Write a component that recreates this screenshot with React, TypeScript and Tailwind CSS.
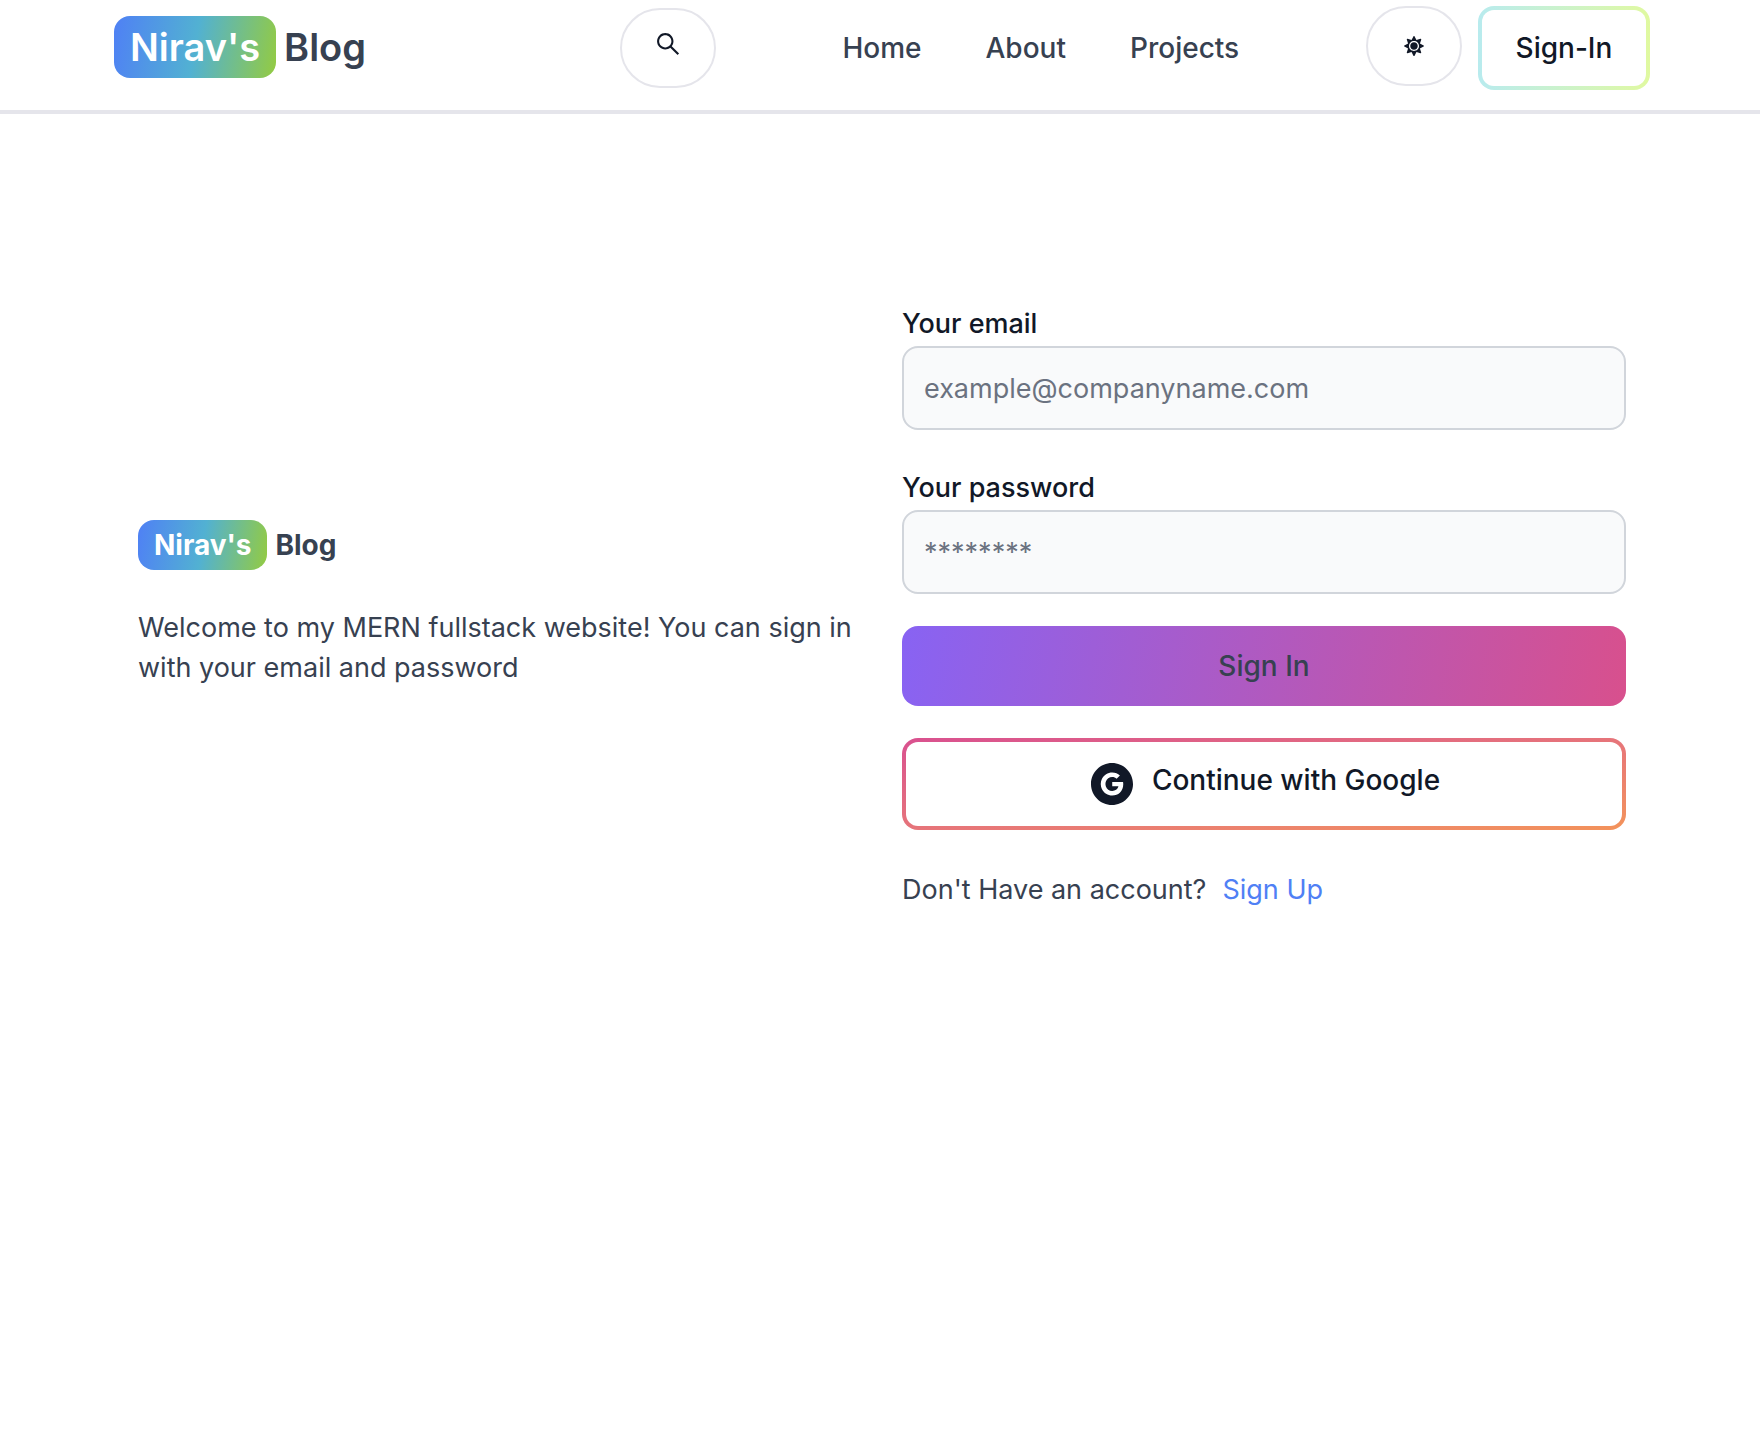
import type { ReactNode } from "react";
import { AiFillGoogleCircle, AiOutlineSearch } from "react-icons/ai";
import { FaSun } from "react-icons/fa";

const navItems = ["Home", "About", "Projects"];

function BrandTag() {
  return (
    <span className="rounded-2xl bg-[linear-gradient(100deg,#4f80f5,#52b1d2_50%,#94cb41)] px-4 text-white">
      Nirav&apos;s
    </span>
  );
}

function RoundButton({ label, className = "", children }: { label: string; className?: string; children: ReactNode }) {
  return (
    <button
      type="button"
      aria-label={label}
      className={`flex h-20 w-24 justify-center rounded-full border-2 border-[#e5e5eb] text-[#111827] ${className}`}
    >
      {children}
    </button>
  );
}

function Field({ id, label, type, placeholder }: { id: string; label: string; type: string; placeholder: string }) {
  return (
    <div>
      <label htmlFor={id} className="block pt-1 text-[27px] leading-[44px] font-medium text-[#111827]">
        {label}
      </label>
      <input
        id={id}
        type={type}
        placeholder={placeholder}
        className="block h-[84px] w-full rounded-2xl border-2 border-[#d1d5db] bg-[#f9fafb] px-5 text-[27px] text-[#111827] placeholder:text-[#6b7280] placeholder:opacity-100"
      />
    </div>
  );
}

export default function App() {
  return (
    <div className="min-h-screen bg-white font-['Inter',sans-serif] text-[27px] leading-10 text-[#374151]">
      <header className="flex items-start justify-between border-b-4 border-[#e5e5eb] pt-[6px] pr-[110px] pb-5 pl-[114px] text-[28px]">
        <a href="#" className="mt-[10px] flex items-center gap-2 text-[38px] leading-[62px] font-semibold">
          <BrandTag />
          Blog
        </a>
        <div />
        <RoundButton label="Search" className="mt-[2px] pt-5">
          <AiOutlineSearch className="size-7" />
        </RoundButton>
        <nav className="flex h-[84px] items-center gap-16 font-medium">
          {navItems.map((item) => (
            <a key={item} href="#">
              {item}
            </a>
          ))}
        </nav>
        <div className="flex items-start gap-4">
          <RoundButton label="Toggle theme" className="items-center">
            <FaSun className="size-5" />
          </RoundButton>
          <a href="#" className="rounded-2xl bg-linear-to-r from-[#b8ebee] to-[#e0f9a0] p-1">
            <span className="flex h-[76px] w-[164px] items-center justify-center rounded-xl bg-white font-medium text-[#111827]">
              Sign-In
            </span>
          </a>
        </div>
      </header>

      <main className="grid grid-cols-2 items-center gap-10 pt-[184px] pr-[134px] pl-[138px]">
        <section>
          <a href="#" className="flex items-center gap-2 text-[28px] leading-[50px] font-bold">
            <BrandTag />
            Blog
          </a>
          <p className="mt-[38px]">
            Welcome to my MERN fullstack website! You can sign in with your email and password
          </p>
        </section>

        <form className="flex flex-col gap-8" onSubmit={(e) => e.preventDefault()}>
          <Field id="email" label="Your email" type="email" placeholder="example@companyname.com" />
          <Field id="password" label="Your password" type="password" placeholder="********" />
          <button
            type="submit"
            className="h-20 rounded-2xl bg-[linear-gradient(100deg,#8863f3,#d8508d)] text-[28px] font-medium"
          >
            Sign In
          </button>
          <button type="button" className="rounded-2xl bg-linear-to-br from-[#d9508f] to-[#f3935a] p-1 text-[28px]">
            <span className="flex h-[84px] justify-center gap-4 rounded-xl bg-white pt-[18px] font-medium text-[#111827]">
              <AiFillGoogleCircle className="size-12" />
              Continue with Google
            </span>
          </button>
          <p className="flex gap-4 pt-2">
            Don&apos;t Have an account?
            <a href="#" className="text-[#4f80f5]">
              Sign Up
            </a>
          </p>
        </form>
      </main>
    </div>
  );
}
